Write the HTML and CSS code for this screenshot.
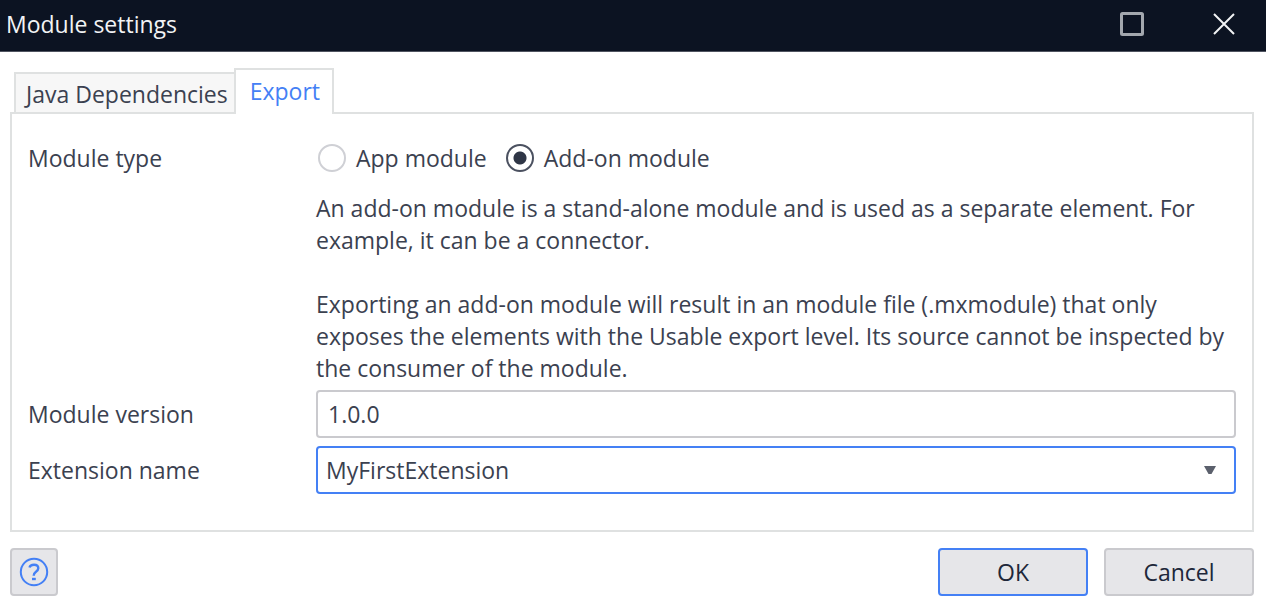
FILE: index.html
```html
<!DOCTYPE html>
<html lang="en">
<head>
<meta charset="utf-8">
<title>Module settings</title>
<link rel="stylesheet" href="styles.css">
</head>
<body>
<div class="dialog">
  <header class="titlebar">
    <h1 class="title">Module settings</h1>
    <div class="window-controls">
      <button class="window-button" type="button" aria-label="Maximize">
        <svg width="24" height="24" viewBox="0 0 24 24"><rect x="1.5" y="1.5" width="21" height="21" rx="1" fill="none" stroke="#a3a7ae" stroke-width="3"/></svg>
      </button>
      <button class="window-button" type="button" aria-label="Close">
        <svg width="24" height="24" viewBox="0 0 24 24"><path d="M2 2L22 22M22 2L2 22" fill="none" stroke="#f2f3f5" stroke-width="2"/></svg>
      </button>
    </div>
  </header>
  <form class="content">
    <div class="tabs" role="tablist">
      <button class="tab" type="button" role="tab" aria-selected="false">Java Dependencies</button>
      <button class="tab tab-active" type="button" role="tab" aria-selected="true">Export</button>
    </div>
    <section class="panel" role="tabpanel">
      <div class="row row-type">
        <span class="label" id="type-label">Module type</span>
        <div class="field">
          <div class="radios" role="radiogroup" aria-labelledby="type-label">
            <label class="option"><input class="radio" type="radio" name="type" value="app">App module</label>
            <label class="option"><input class="radio" type="radio" name="type" value="addon" checked>Add-on module</label>
          </div>
          <div class="description">
            <p class="paragraph">An add-on module is a stand-alone module and is used as a separate element. For<br>example, it can be a connector.</p>
            <p class="paragraph">Exporting an add-on module will result in an module file (.mxmodule) that only<br>exposes the elements with the Usable export level. Its source cannot be inspected by<br>the consumer of the module.</p>
          </div>
        </div>
      </div>
      <div class="row">
        <label class="label" for="version">Module version</label>
        <input class="control" id="version" type="text" value="1.0.0">
      </div>
      <div class="row">
        <label class="label" for="extension">Extension name</label>
        <div class="select-wrap">
          <select class="control select" id="extension"><option>MyFirstExtension</option></select>
          <svg class="arrow" width="14" height="10" viewBox="0 0 14 10"><path d="M1 1H13L8.500 9H5.500Z" fill="#5b606c"/></svg>
        </div>
      </div>
    </section>
    <footer class="footer">
      <button class="button help" type="button" aria-label="Help">
        <svg width="30" height="30" viewBox="0 0 30 30" fill="none" stroke="#4480f5" stroke-width="2"><circle cx="15" cy="15" r="13.200"/><path d="M10.500 10.500C11 8.600 12.700 7.700 15 7.700C17.600 7.700 19.300 9 19.300 11.200C19.300 13.100 18 14 16.700 14.900C15.400 15.800 14.700 16.600 14.700 18.800" stroke-width="2.400"/><path d="M13 22H16.800" stroke-width="2.400"/></svg>
      </button>
      <button class="button primary" type="submit">OK</button>
      <button class="button" type="button">Cancel</button>
    </footer>
  </form>
</div>
</body>
</html>
```
FILE: styles.css
```css
* { box-sizing: border-box; }
body {
  margin: 0;
  background: #fff;
  color: #3b4150;
  font-family: "Open Sans", "Noto Sans", sans-serif;
  font-size: 23px;
  line-height: 32px;
}
button, input, select { font: inherit; color: inherit; margin: 0; }
svg { display: block; }
.titlebar {
  display: flex;
  justify-content: space-between;
  align-items: center;
  padding: 7px 24px 10px 6px;
  background: #0c1322;
  border-bottom: 1px solid #4f5460;
  min-height: 52px;
}
.title { margin: 0; font-size: 23px; line-height: 34px; font-weight: 400; color: #f2f3f5; }
.window-controls { display: flex; gap: 56px; }
.window-button { padding: 0; border: 0; background: none; width: 36px; display: grid; place-items: center; }
.content { padding: 16px 12px 12px 10px; }
.tabs { display: flex; align-items: flex-end; padding-left: 4px; position: relative; margin-bottom: -2px; }
.tab {
  padding: 4px 6px 4px 10px;
  border: 2px solid #dfe1e1;
  border-right-width: 0;
  background: #f7f7f7;
  height: 42px;
  line-height: 32px;
}
.tab-active {
  height: 46px;
  padding: 4px 12px 6px 14px;
  border-right-width: 2px;
  border-bottom: 0;
  background: #fff;
  color: #4480f5;
}
.panel {
  display: grid;
  gap: 8px;
  padding: 28px 16px 36px;
  border: 2px solid #dfe1e1;
}
.row { display: grid; grid-template-columns: 288px 1fr; align-items: center; }
.row-type { align-items: start; margin-bottom: -2px; }
.radios { display: flex; gap: 17px; margin-bottom: 18px; }
.option { display: flex; align-items: center; gap: 10px; }
.radio {
  appearance: none;
  width: 28px;
  height: 28px;
  margin: 0 0 0 2px;
  border: 2px solid #cfd0d5;
  border-radius: 50%;
  background: #fff;
}
.radio:checked {
  border-color: #4b5160;
  background: radial-gradient(circle, #2f3646 0 6px, #fff 7px);
}
.paragraph { margin: 0; }
.paragraph + .paragraph { margin-top: 32px; }
.control {
  width: 100%;
  height: 48px;
  padding: 0 10px;
  border: 2px solid #cacace;
  border-radius: 4px;
  background: #fff;
  outline: 0;
}
.select-wrap { position: relative; }
.select { display: block; appearance: none; padding: 0 8px; border-color: #4480f5; }
.arrow { position: absolute; right: 19px; top: 19px; pointer-events: none; }
.footer { display: flex; gap: 16px; padding-top: 16px; }
.button {
  width: 150px;
  height: 48px;
  padding: 0;
  border: 2px solid #cacace;
  border-radius: 4px;
  background: #e6e6e9;
  color: #20273a;
}
.primary { border-color: #4480f5; }
.help { width: 48px; margin-right: auto; display: grid; place-items: center; }
```
